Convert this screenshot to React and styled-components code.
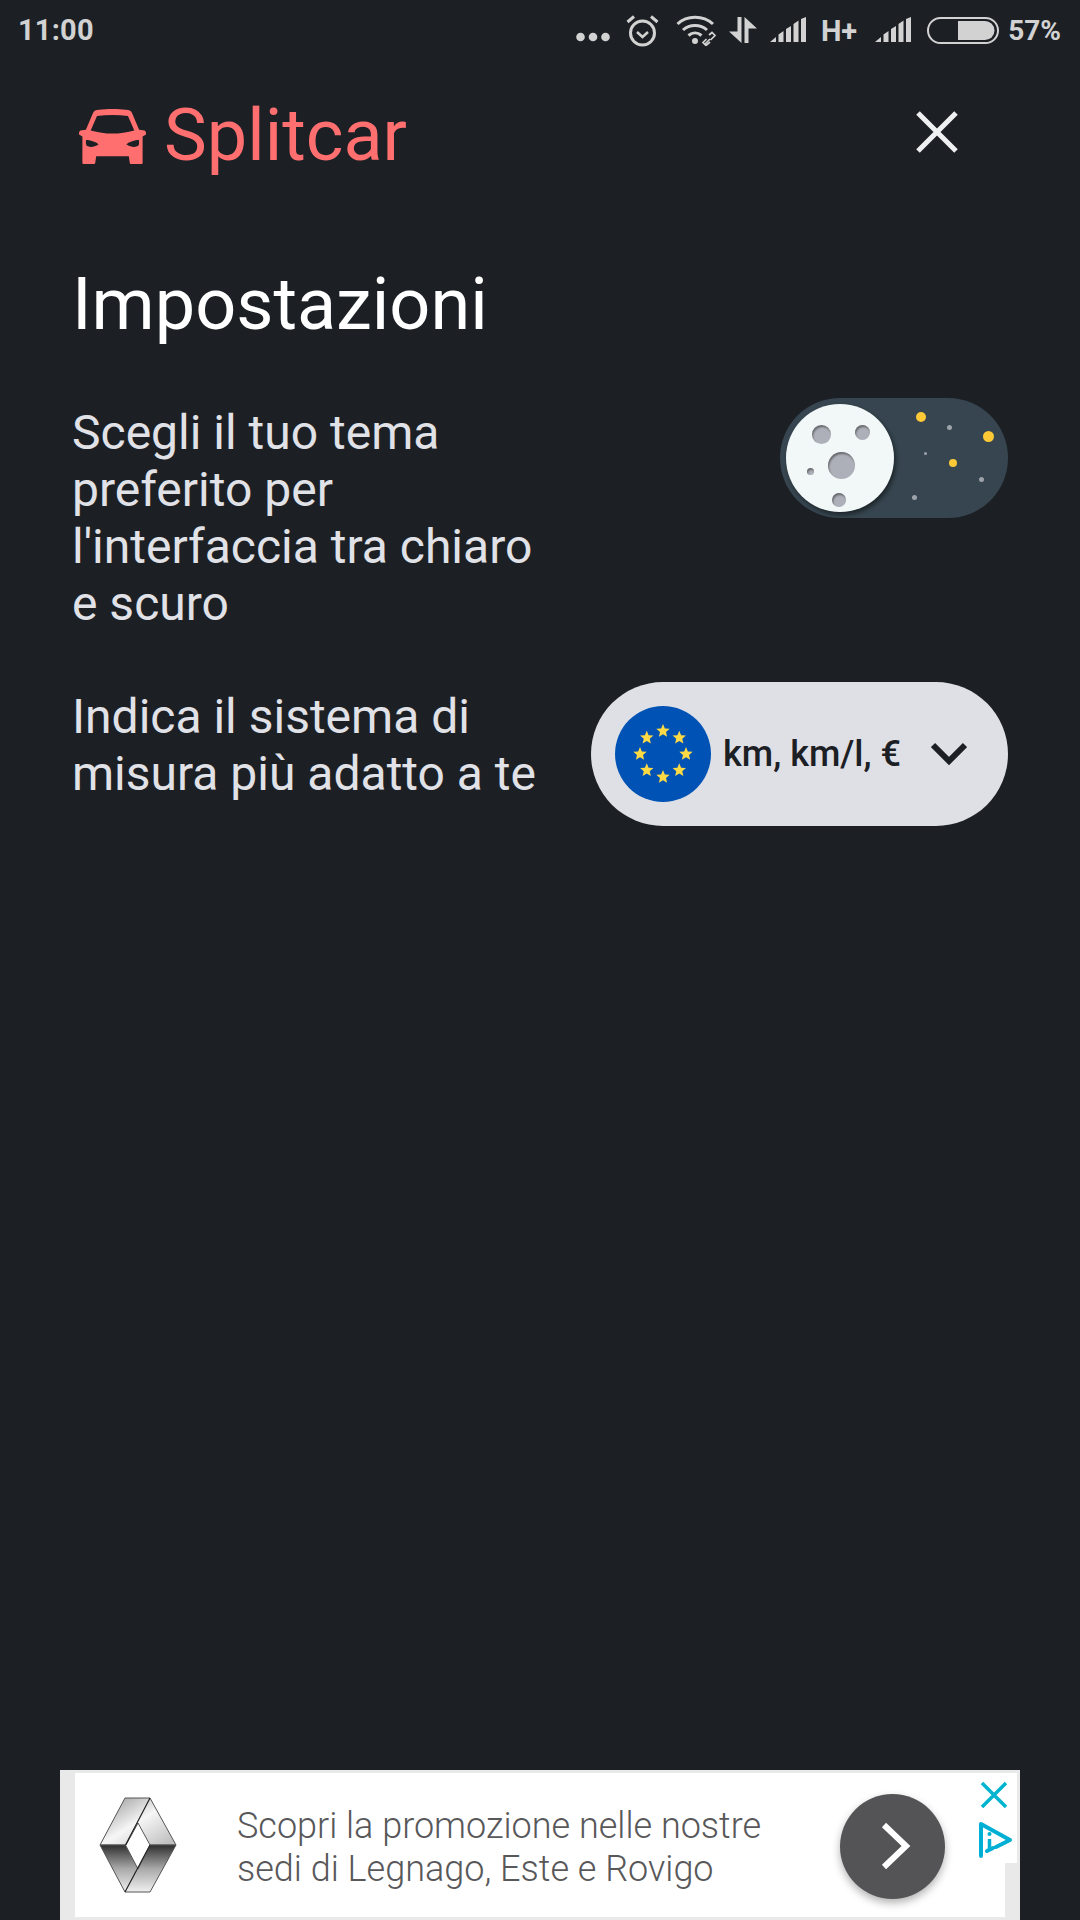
import React from 'react';
import styled, { createGlobalStyle } from 'styled-components';

const Global = createGlobalStyle`
  html, body { margin: 0; padding: 0; background: #1c2025; }
  * { box-sizing: border-box; }
`;

const Page = styled.div`
  width: 1080px;
  height: 1920px;
  background: #1c2025;
  display: flex;
  flex-direction: column;
  font-family: Roboto, "Liberation Sans", sans-serif;
  overflow: hidden;
`;

const StatusBar = styled.div`
  height: 60px;
  padding: 0 19px 0 18px;
  display: flex;
  align-items: center;
  color: #d2d2d2;
  font-weight: 700;
  font-size: 29px;
`;
const Clock = styled.span`
  margin-right: auto;
  letter-spacing: 0.2px;
`;
const StatusIcons = styled.div`
  display: flex;
  align-items: center;
`;
const StatusGlyph = styled.svg`
  display: block;
  margin-left: ${p => p.$gap || 0}px;
`;
const StatusDots = styled.svg`
  display: block;
  margin-top: 13px;
`;
const StatusText = styled.span`
  margin-left: ${p => p.$gap || 0}px;
  font-size: ${p => p.$size || 29}px;
  padding-top: ${p => p.$top || 0}px;
`;

const Header = styled.header`
  display: flex;
  align-items: center;
  justify-content: space-between;
  padding: 43px 122px 0 79px;
  height: 114px;
`;
const Brand = styled.div`
  display: flex;
  align-items: center;
  gap: 18px;
  margin-top: -5px;
  color: #ff6f6f;
  font-size: 72px;
  line-height: 84px;
`;
const BrandIcon = styled.svg`
  display: block;
  flex: none;
`;
const CloseBtn = styled.svg`
  display: block;
  margin-top: -13px;
`;

const Title = styled.h1`
  margin: 89px 0 0 72px;
  font-size: 72px;
  line-height: 84px;
  font-weight: 400;
  color: #fff;
`;

const Settings = styled.div`
  padding: 51px 72px 0 72px;
  display: flex;
  flex-direction: column;
  gap: 50px;
`;
const Row = styled.div`
  display: flex;
  justify-content: space-between;
  align-items: flex-start;
`;
const Label = styled.p`
  margin: 6px 0 0;
  width: 480px;
  font-size: 48px;
  line-height: 57px;
  color: #e1e2e7;
`;

const Toggle = styled.div`
  position: relative;
  width: 228px;
  height: 120px;
  border-radius: 60px;
  background: #36454f;
`;
const Knob = styled.div`
  position: absolute;
  left: 6px;
  top: 6px;
  width: 108px;
  height: 108px;
  border-radius: 50%;
  background: #f1f8f7;
  box-shadow: 2px 3px 4px rgba(0,0,0,.45);
`;
const Crater = styled.div`
  position: absolute;
  border-radius: 50%;
  background: #adb0b8;
  box-shadow: inset 1px 2px 2px rgba(0,0,0,.4);
`;
const Star = styled.div`
  position: absolute;
  border-radius: 50%;
  background: ${p => (p.$gold ? '#fdc936' : '#9ea2ab')};
`;

const Select = styled.div`
  width: 417px;
  height: 144px;
  border-radius: 72px;
  background: #dfe0e6;
  display: flex;
  align-items: center;
  padding-left: 24px;
`;
const FlagSvg = styled.svg`
  display: block;
  flex: none;
`;
const SelectText = styled.span`
  margin-left: 12px;
  font-size: 36px;
  font-weight: 500;
  color: #1c2025;
  white-space: nowrap;
`;
const Chevron = styled.svg`
  display: block;
  margin-left: 30px;
`;

const Spacer = styled.div`
  flex: 1;
`;

const Ad = styled.div`
  position: relative;
  height: 150px;
  margin: 0 60px;
  padding: 3px 3px 3px 15px;
  background: #e9e9e9;
`;
const AdInner = styled.div`
  height: 144px;
  background: #fff;
  display: flex;
  align-items: center;
  padding-left: 24px;
`;
const AdLogo = styled.svg`
  display: block;
  flex: none;
`;
const AdText = styled.div`
  margin: 6px 0 0 60px;
  width: 603px;
  font-size: 36px;
  line-height: 43px;
  font-weight: 300;
  color: #58585a;
  white-space: nowrap;
`;
const AdButton = styled.div`
  width: 105px;
  height: 105px;
  margin-top: 2px;
  flex: none;
  border-radius: 50%;
  background: #545456;
  box-shadow: 0 4px 8px rgba(0,0,0,.3);
  display: flex;
  align-items: center;
  justify-content: center;
`;
const AdArrow = styled.svg`
  display: block;
  margin-left: 6px;
`;
const AdCorner = styled.div`
  position: absolute;
  right: 3px;
  bottom: 3px;
  width: 12px;
  height: 54px;
  background: #e9e9e9;
`;
const AdClose = styled.svg`
  position: absolute;
  left: 920px;
  top: 11px;
`;
const AdChoice = styled.svg`
  position: absolute;
  left: 917px;
  top: 51px;
`;

const craters = [
  { x: 26, y: 21, s: 19 }, { x: 69, y: 21, s: 15 }, { x: 42, y: 48, s: 27 },
  { x: 21, y: 64, s: 7 }, { x: 46, y: 89, s: 14 },
];
const stars = [
  { x: 136, y: 14, s: 10, g: 1 }, { x: 167, y: 27, s: 5 }, { x: 203, y: 33, s: 11, g: 1 },
  { x: 144, y: 54, s: 3 }, { x: 169, y: 61, s: 8, g: 1 }, { x: 199, y: 79, s: 5 }, { x: 132, y: 97, s: 5 },
];

const euStars = Array.from({ length: 8 }, (_, i) => {
  const a = (i * Math.PI) / 4 - Math.PI / 2;
  return [48 + 23 * Math.cos(a), 48 + 23 * Math.sin(a)];
});
const starPts = (cx, cy, r) =>
  Array.from({ length: 10 }, (_, i) => {
    const a = (i * Math.PI) / 5 - Math.PI / 2;
    const q = i % 2 ? r * 0.45 : r;
    return `${(cx + q * Math.cos(a)).toFixed(2)},${(cy + q * Math.sin(a)).toFixed(2)}`;
  }).join(' ');

const Signal = ({ gap }) => (
  <StatusGlyph $gap={gap} width="37" height="26" viewBox="0 0 37 26" fill="#d2d2d2">
    <path d="M0 25 L6 20 V25Z M8.500 25 V17.500 L13.500 14 V25Z M16 25 V12 L21 9 V25Z M23.500 25 V7 L28.500 3.500 V25Z M31 25 V2 L36 0 V25Z" />
  </StatusGlyph>
);

export default function App() {
  return (
    <Page>
      <Global />
      <StatusBar>
        <Clock>11:00</Clock>
        <StatusIcons>
          <StatusDots width="34" height="10" viewBox="0 0 34 10" fill="#d2d2d2">
            <circle cx="4.500" cy="5" r="4.300" /><circle cx="17" cy="5" r="4.300" /><circle cx="29.500" cy="5" r="4.300" />
          </StatusDots>
          <StatusGlyph $gap={16} width="33" height="33" viewBox="0 0 33 33" fill="none" stroke="#d2d2d2" strokeWidth="3">
            <circle cx="16.500" cy="19" r="12" />
            <path d="M11 18 L16.500 23 L22 18" strokeWidth="2.500" />
            <path d="M1.500 8 L8 2.500 M31.500 8 L25 2.500" />
          </StatusGlyph>
          <StatusGlyph $gap={17} width="41" height="31" viewBox="0 0 41 31" fill="none" stroke="#d2d2d2" strokeWidth="3">
            <path d="M1.500 9 C11 0 27 0 37 9" />
            <path d="M7 15 C13.500 9 24.500 9 31 15" />
            <path d="M12.500 20.500 C16.500 17 21.500 17 25.500 20.500" />
            <circle cx="19" cy="26" r="3" fill="#d2d2d2" stroke="none" />
            <path d="M29 29 L34 24 M33 20 L36 17.500 L39 20.500 L34.500 25 M30.500 24 L27 27.500 L30 30.500 L34 27" strokeWidth="1.700" />
          </StatusGlyph>
          <StatusGlyph $gap={12} width="28" height="28" viewBox="0 0 28 28" fill="#d2d2d2">
            <path d="M8.500 1 H12.500 V27 L0 15.500 H8.500Z M15.500 27 V1 L28 12.500 H19.500 V27Z" />
          </StatusGlyph>
          <Signal gap={13} />
          <StatusText $gap={14} $size={29} $top={2}>H+</StatusText>
          <Signal gap={18} />
          <StatusGlyph $gap={15} width="72" height="27" viewBox="0 0 72 27">
            <rect x="1" y="1" width="70" height="25" rx="12.500" fill="none" stroke="#d2d2d2" strokeWidth="2" />
            <path d="M31 4 H58 A9.500 9.500 0 0 1 58 23 H31Z" fill="#d2d2d2" />
          </StatusGlyph>
          <StatusText $gap={9} $size={28}>57%</StatusText>
        </StatusIcons>
      </StatusBar>

      <Header>
        <Brand>
          <BrandIcon width="67" height="55" viewBox="0 0 67 55" fill="#ff6f6f" fillRule="evenodd">
            <path d="M14 4 C15 1.500 17 1.200 20 .8 C28 -.2 39 -.2 47 .8 C50 1.200 52 1.500 53 4 L60.100 20.700 L65.600 21.400 C67 22 67.300 25 67 25.500 L63.600 27.600 V54 Q63.600 55 62.600 55 H51.800 Q50.800 55 50.800 54 L49.800 47.200 H17.200 L16.200 54 Q16.200 55 15 55 H4.400 Q3.400 55 3.400 54 V27.600 L0 25.500 C-.3 25 0 22 1.400 21.400 L6.900 20.700 Z M18 6.900 C28 5.800 39 5.800 49 6.900 L55.300 21.400 C41 25.500 26 25.500 11.700 21.400 Z M7 31 C11 31 17 33 19.700 35.200 C17 37 14 38 11.700 37.900 L8 37 Q6.900 36 6.900 34 Z M60 31 C56 31 50 33 47.300 35.200 C50 37 53 38 55.300 37.900 L59 37 Q60.100 36 60.100 34 Z" />
          </BrandIcon>
          <span>Splitcar</span>
        </Brand>
        <CloseBtn width="42" height="42" viewBox="0 0 42 42" fill="none" stroke="#eef0f2" strokeWidth="5">
          <path d="M2 2 L40 40 M40 2 L2 40" />
        </CloseBtn>
      </Header>

      <Title>Impostazioni</Title>

      <Settings>
        <Row>
          <Label>Scegli il tuo tema preferito per l'interfaccia tra chiaro e scuro</Label>
          <Toggle>
            {stars.map((s, i) => (
              <Star key={i} $gold={s.g} style={{ left: s.x, top: s.y, width: s.s, height: s.s }} />
            ))}
            <Knob>
              {craters.map((c, i) => (
                <Crater key={i} style={{ left: c.x, top: c.y, width: c.s, height: c.s }} />
              ))}
            </Knob>
          </Toggle>
        </Row>
        <Row>
          <Label>Indica il sistema di misura più adatto a te</Label>
          <Select>
            <FlagSvg width="96" height="96" viewBox="0 0 96 96">
              <circle cx="48" cy="48" r="48" fill="#0053b5" />
              {euStars.map(([x, y], i) => (
                <polygon key={i} points={starPts(x, y, 7)} fill="#ffda44" />
              ))}
            </FlagSvg>
            <SelectText>km, km/l, €</SelectText>
            <Chevron width="36" height="24" viewBox="0 0 36 24" fill="none" stroke="#1c2025" strokeWidth="6">
              <path d="M2 3 L18 19 L34 3" />
            </Chevron>
          </Select>
        </Row>
      </Settings>

      <Spacer />

      <Ad>
        <AdInner>
          <AdLogo width="78" height="96" viewBox="0 0 78 96">
            <defs>
              <linearGradient id="rUp" x1="0" y1="0" x2="1" y2="1">
                <stop offset="0" stopColor="#8f8f8f" />
                <stop offset="0.5" stopColor="#f6f6f6" />
                <stop offset="1" stopColor="#b8b8b8" />
              </linearGradient>
              <linearGradient id="rDown" x1="0" y1="0" x2="0" y2="1">
                <stop offset="0" stopColor="#2e2e2e" />
                <stop offset="0.5" stopColor="#a8a8a8" />
                <stop offset="1" stopColor="#f0f0f0" />
              </linearGradient>
            </defs>
            <path d="M26 1 H51 L77 48 H51 L39 26 L27 48 H1Z" fill="url(#rUp)" stroke="#555" strokeWidth="1" />
            <path d="M1 48 H26.500 L39 72 L51 48 H77 L51 95 H26Z" fill="url(#rDown)" stroke="#555" strokeWidth="1" />
            <path d="M51 1 L26.500 48 M26 95 L51 48" stroke="#222" strokeWidth="1.200" fill="none" />
          </AdLogo>
          <AdText>
            Scopri la promozione nelle nostre<br />sedi di Legnago, Este e Rovigo
          </AdText>
          <AdButton>
            <AdArrow width="30" height="48" viewBox="0 0 30 48" fill="none" stroke="#fff" strokeWidth="6">
              <path d="M3 3 L25 24 L3 45" />
            </AdArrow>
          </AdButton>
        </AdInner>
        <AdCorner />
        <AdClose width="28" height="28" viewBox="0 0 28 28" fill="none" stroke="#00b4d0" strokeWidth="3.500">
          <path d="M2 2 L26 26 M26 2 L2 26" />
        </AdClose>
        <AdChoice width="36" height="38" viewBox="0 0 36 38" fill="none" stroke="#00afd4" strokeWidth="4">
          <path d="M10 30 L16 27 M19 26 L33 19 L4 3 V35" strokeLinejoin="round" strokeLinecap="round" />
          <path d="M12.500 18 V29" strokeWidth="3.500" />
          <circle cx="12.500" cy="13" r="2" fill="#00afd4" stroke="none" />
        </AdChoice>
      </Ad>
    </Page>
  );
}
